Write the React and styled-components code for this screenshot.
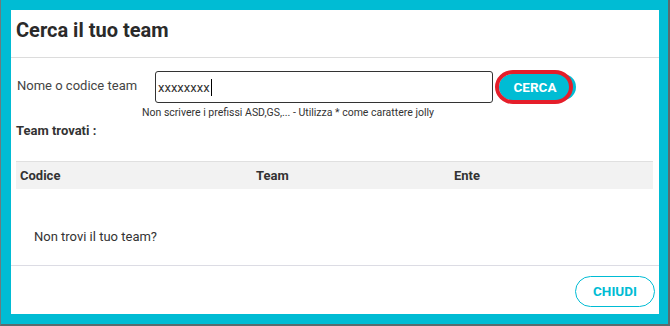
import styled, { createGlobalStyle } from "styled-components";

const Global = createGlobalStyle`
  html, body {
    margin: 0;
    padding: 0;
    background: #00bcd4;
    font-family: Roboto, "Liberation Sans", sans-serif;
  }
`;

const Screen = styled.div`
  width: 670px;
  height: 326px;
  box-sizing: border-box;
  background: #00bcd4;
  border-left: 1px solid #6b7b7d;
  border-right: 2px solid #5a6b6d;
  border-bottom: 2px solid #5a6b6d;
  padding: 10px 9px 9px 10px;
`;

const Modal = styled.div`
  background: #fff;
  height: 304px;
  display: flex;
  flex-direction: column;
`;

const Header = styled.div`
  height: 48px;
  box-sizing: border-box;
  border-bottom: 1px solid #dcdcdc;
  padding: 8px 0 0 5px;
  font-size: 20px;
  font-weight: 700;
  color: #2a2a2a;
`;

const Body = styled.div`
  flex: 1;
  padding: 13px 5px 0 5px;
  border-bottom: 1px solid #dcdce4;
  color: #333;
`;

const SearchRow = styled.div`
  display: flex;
  align-items: center;
`;

const Label = styled.label`
  width: 138px;
  font-size: 13px;
  color: #444;
  padding-left: 1px;
  margin-top: -3px;
`;

const Input = styled.div`
  width: 338px;
  height: 32px;
  box-sizing: border-box;
  border: 1px solid #333;
  border-radius: 3px;
  padding: 0 2px;
  display: flex;
  align-items: center;
  font-size: 13px;
  color: #333;
`;

const Caret = styled.span`
  display: inline-block;
  width: 1px;
  height: 17px;
  background: #000;
  margin-left: 1px;
`;

const ButtonWrap = styled.div`
  position: relative;
  margin-left: 6px;
  width: 77px;
  height: 26px;
`;

const SearchButton = styled.button`
  width: 77px;
  height: 26px;
  border: none;
  border-radius: 13px;
  background: #00bcd4;
  color: #fff;
  font-family: inherit;
  font-weight: 700;
  font-size: 13.5px;
  padding: 0 5px 0 0;
`;

const RedRing = styled.span`
  position: absolute;
  left: -4px;
  top: -4px;
  width: 70px;
  height: 26px;
  border: 4px solid #e51e2a;
  border-radius: 18px / 50%;
  pointer-events: none;
`;

const Hint = styled.div`
  font-size: 10.5px;
  color: #333;
  margin: 3px 0 0 126px;
`;

const Found = styled.div`
  font-size: 13px;
  font-weight: 700;
  color: #333;
  margin-top: 4px;
`;

const Table = styled.div`
  margin-top: 23px;
  margin-right: 1px;
  height: 27px;
  background: #f2f2f2;
  border-top: 1px solid #e0e0e0;
  display: grid;
  grid-template-columns: 236px 198px 1fr;
  align-items: center;
  padding-left: 4px;
  font-size: 13px;
  font-weight: 700;
  color: #333;
`;

const Missing = styled.div`
  margin: 40px 0 0 18px;
  font-size: 13px;
  color: #333;
`;

const Footer = styled.div`
  height: 48px;
  display: flex;
  justify-content: flex-end;
  align-items: center;
  padding-right: 4px;
`;

const CloseButton = styled.button`
  width: 80px;
  height: 31px;
  border: 1px solid #00bcd4;
  border-radius: 16px;
  background: #fff;
  color: #00bcd4;
  font-family: inherit;
  font-weight: 700;
  font-size: 13.5px;
  margin-top: 2px;
`;

export default function App() {
  return (
    <Screen>
      <Global />
      <Modal>
        <Header>Cerca il tuo team</Header>
        <Body>
          <SearchRow>
            <Label>Nome o codice team</Label>
            <Input>
              xxxxxxxx
              <Caret />
            </Input>
            <ButtonWrap>
              <SearchButton>CERCA</SearchButton>
              <RedRing />
            </ButtonWrap>
          </SearchRow>
          <Hint>Non scrivere i prefissi ASD,GS,... - Utilizza * come carattere jolly</Hint>
          <Found>Team trovati :</Found>
          <Table>
            <span>Codice</span>
            <span>Team</span>
            <span>Ente</span>
          </Table>
          <Missing>Non trovi il tuo team?</Missing>
        </Body>
        <Footer>
          <CloseButton>CHIUDI</CloseButton>
        </Footer>
      </Modal>
    </Screen>
  );
}
